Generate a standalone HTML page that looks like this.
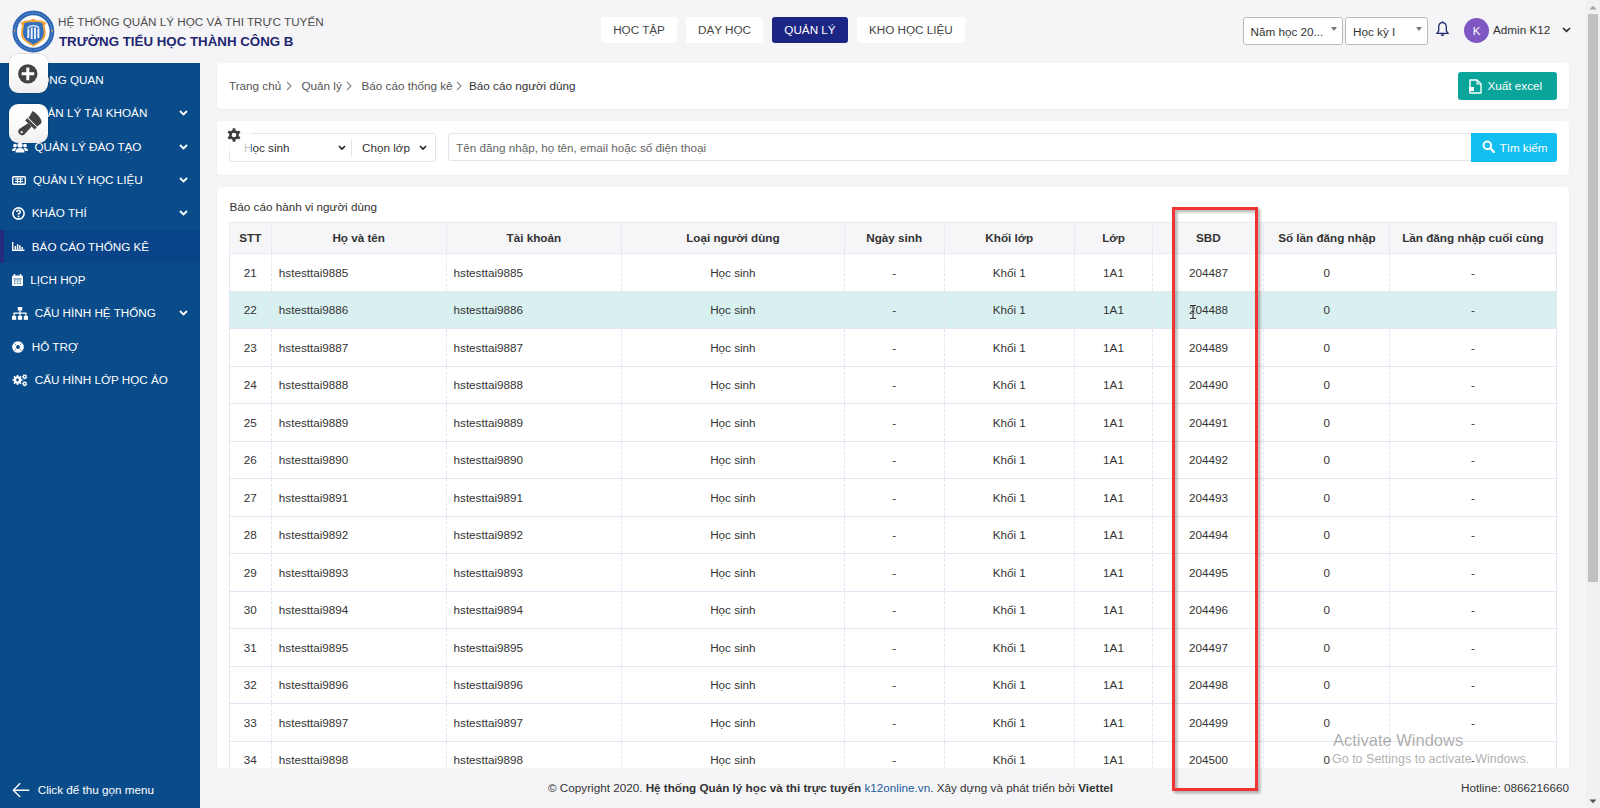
<!DOCTYPE html>
<html><head><meta charset="utf-8">
<style>
*{box-sizing:border-box;margin:0;padding:0}
html,body{width:1600px;height:808px;overflow:hidden}
body{font-family:"Liberation Sans",sans-serif;background:#f5f5f7;position:relative;color:#333;font-size:11.7px}
.abs{position:absolute}
/* header */
#logo{left:12px;top:10px;width:43px;height:43px}
#t1{left:58px;top:15px;font-size:11.7px;color:#4d4d4d;white-space:nowrap}
#t2{left:59px;top:33.5px;font-size:13.3px;font-weight:bold;color:#1f2670;white-space:nowrap}
.nav{top:16.5px;height:26.7px;background:#fff;border-radius:3px;font-size:11.7px;color:#444;text-align:center;line-height:26.7px}
.nav.act{background:#1b2583;color:#fff}
.sel{top:17px;height:28px;background:#fff;border:1px solid #b9b9b9;border-radius:3px;font-size:11.7px;color:#333;line-height:27px;padding-left:7px;white-space:nowrap}
.sel i{position:absolute;top:8.7px;border-left:3.5px solid transparent;border-right:3.5px solid transparent;border-top:4px solid #777}
/* sidebar */
#side{left:0;top:63px;width:200px;height:745px;background:#0a4c8a}
.mi{position:absolute;left:0;width:200px;height:33.3px;color:#fff;font-size:11.7px;line-height:33.3px;white-space:nowrap}
.mi svg.ic{position:absolute;left:12px}
.mi .tx{position:absolute;left:33px;top:0}
.mi svg.ch{position:absolute;left:179px;top:14px}
.mi.act{background:#0a4488}
.mi.act:before{content:"";position:absolute;left:0;top:0;width:4px;height:100%;background:#272b7d}
.fb{position:absolute;left:9px;width:39.4px;height:39px;border-radius:9px;background:linear-gradient(#fff 0%,#fbfbfb 50%,#efefef 100%);box-shadow:0 0 0 0.6px rgba(0,0,0,.18)}
/* cards */
.card{position:absolute;background:#fff;border-radius:4px;box-shadow:0 1px 3px rgba(0,0,0,.035)}
.bc{position:absolute;top:0;line-height:45px;color:#555;font-size:11.7px;white-space:nowrap}
table{position:absolute;left:228.8px;top:222px;border-collapse:collapse;table-layout:fixed;width:1327px}
th{height:31.25px;padding-bottom:0.4px;background:#f6f6f8;font-weight:bold;color:#333;font-size:11.7px;border:1px solid #e8eaf5;text-align:center;white-space:nowrap}
td{height:37.5px;padding-bottom:1px;font-size:11.7px;color:#333;border-left:1px dashed #e4e6f3;border-right:1px dashed #e4e6f3;border-bottom:1px solid #e4e6f3;white-space:nowrap;background:#fff}
td:first-child{border-left:1px solid #e4e6f3}
td:last-child{border-right:1px solid #e4e6f3}
td.c{text-align:center}
td.l{text-align:left;padding-left:7px}
tr.hl td{background:#d9f0f0}
#clip{position:absolute;left:0;top:0;width:1600px;height:767.7px;overflow:hidden}
</style></head><body>

<!-- header -->
<svg class="abs" style="left:10px;top:8px" width="48" height="48" viewBox="0 0 48 48">
<circle cx="23.35" cy="23.5" r="18.6" fill="#fff" stroke="#2d66b5" stroke-width="4.6"/>
<circle cx="23.35" cy="23.5" r="18.6" fill="none" stroke="#d5e1f2" stroke-width="1" stroke-dasharray="0.8 1.1" opacity="0.6"/>
<circle cx="4.6" cy="22.6" r="0.9" fill="#f0a640"/><circle cx="42.1" cy="22.6" r="0.9" fill="#f0a640"/>
<path d="M12.3 13.6 Q17 11.8 20.5 12.2 Q22 10.8 23.35 10.8 Q24.7 10.8 26.2 12.2 Q29.7 11.8 34.4 13.6 Q34.5 18 35.5 22 Q36.5 28.5 33.2 32 Q28.8 36 23.35 38.6 Q17.9 36 13.5 32 Q10.2 28.5 11.2 22 Q12.2 18 12.3 13.6 Z" fill="#eea53f"/>
<circle cx="12.2" cy="15.4" r="1.6" fill="#eea53f"/><circle cx="34.5" cy="15.4" r="1.6" fill="#eea53f"/>
<path d="M14.2 15.2 Q19 13.6 23.35 14.2 Q27.7 13.6 32.5 15.2 Q32.6 18.5 33.5 22 Q34.3 28 31.3 31.2 Q27.8 34.5 23.35 36.4 Q18.9 34.5 15.4 31.2 Q12.4 28 13.2 22 Q14.1 18.5 14.2 15.2 Z" fill="#3470c0"/>
<path d="M18.3 20.5v9.5M21.7 19.5v11.5M25 19.5v11.5M28.4 20.5v9.5" stroke="#eef3fa" stroke-width="1.9"/>
<path d="M17.5 19.8 Q23.35 15.5 29.2 19.8" stroke="#eef3fa" stroke-width="1.3" fill="none"/>
</svg>
<div class="abs" id="t1">HỆ THỐNG QUẢN LÝ HỌC VÀ THI TRỰC TUYẾN</div>
<div class="abs" id="t2">TRƯỜNG TIỂU HỌC THÀNH CÔNG B</div>

<div class="abs nav" style="left:600.7px;width:76.7px">HỌC TẬP</div>
<div class="abs nav" style="left:686px;width:77px">DẠY HỌC</div>
<div class="abs nav act" style="left:771.8px;width:76.4px">QUẢN LÝ</div>
<div class="abs nav" style="left:857px;width:107.8px">KHO HỌC LIỆU</div>

<div class="abs sel" style="left:1242.5px;width:100px">Năm học 20...<i style="left:87px"></i></div>
<div class="abs sel" style="left:1345px;width:83px">Học kỳ I<i style="left:70px"></i></div>

<!-- bell -->
<svg class="abs" style="left:1435px;top:21px" width="15" height="16" viewBox="0 0 15 16">
<path d="M7.5 1.6 C5 1.6 3.7 3.7 3.7 6.3 L3.7 9.8 L1.8 12.4 L13.2 12.4 L11.3 9.8 L11.3 6.3 C11.3 3.7 10 1.6 7.5 1.6 Z" fill="none" stroke="#1f2a70" stroke-width="1.3" stroke-linejoin="round"/>
<path d="M7.5 0.3v1.3" stroke="#1f2a70" stroke-width="1.3"/>
<path d="M6 13.6 Q7.5 15.4 9 13.6" fill="#1f2a70" stroke="#1f2a70" stroke-width="1.2"/>
</svg>
<!-- avatar -->
<div class="abs" style="left:1464px;top:18px;width:25px;height:25px;border-radius:50%;background:#7e57c2;color:#fff;font-size:11.5px;text-align:center;line-height:27px">K</div>
<div class="abs" style="left:1493px;top:23px;font-size:11.7px;color:#333;white-space:nowrap">Admin K12</div>
<svg class="abs" style="left:1561.5px;top:27.3px" width="9" height="6" viewBox="0 0 9 6"><path d="M1 1 L4.5 4.3 L8 1" fill="none" stroke="#2a2a2a" stroke-width="1.6"/></svg>

<!-- scrollbar -->
<div class="abs" style="left:1586px;top:0;width:14px;height:808px;background:#f1f1f1"></div>
<div class="abs" style="left:1587.5px;top:14px;width:10.6px;height:567.6px;background:#c1c1c1"></div>
<svg class="abs" style="left:1589px;top:5px" width="8" height="5" viewBox="0 0 8 5"><path d="M0.5 4.5 L4 0.8 L7.5 4.5 Z" fill="#a3a3a3"/></svg>
<svg class="abs" style="left:1589px;top:798.5px" width="8" height="5" viewBox="0 0 8 5"><path d="M0.5 0.5 L4 4.2 L7.5 0.5 Z" fill="#505050"/></svg>

<!-- sidebar -->
<div class="abs" id="side">
</div>

<div class="abs" style="left:0;top:63px;width:200px;height:745px">
<div class="mi" style="top:0"><span class="tx" style="left:33px">TỔNG QUAN</span></div>
<div class="mi" style="top:33.3px"><span class="tx" style="left:30px">QUẢN LÝ TÀI KHOẢN</span><svg class="ch" width="9" height="6" viewBox="0 0 9 6"><path d="M1 1 L4.5 4.5 L8 1" fill="none" stroke="#fff" stroke-width="1.8"/></svg></div>
<div class="mi" style="top:66.6px">
<svg class="ic" style="top:12px" width="16" height="11" viewBox="0 0 16 11"><circle cx="8" cy="3" r="2.6" fill="#fff"/><path d="M3.5 10.5 Q3.5 6 8 6 Q12.5 6 12.5 10.5 Z" fill="#fff"/><circle cx="3" cy="3.6" r="1.9" fill="#fff"/><circle cx="13" cy="3.6" r="1.9" fill="#fff"/><path d="M0 9 Q0 6 3 6 Q4 6 4.5 6.5 Q3 8 3 9 Z M16 9 Q16 6 13 6 Q12 6 11.5 6.5 Q13 8 13 9 Z" fill="#fff"/></svg>
<span class="tx" style="left:34.5px">QUẢN LÝ ĐÀO TẠO</span><svg class="ch" width="9" height="6" viewBox="0 0 9 6"><path d="M1 1 L4.5 4.5 L8 1" fill="none" stroke="#fff" stroke-width="1.8"/></svg></div>
<div class="mi" style="top:100px">
<svg class="ic" style="top:12.5px" width="14" height="9" viewBox="0 0 14 9"><rect x="0.7" y="0.7" width="12.6" height="7.6" rx="1" fill="none" stroke="#fff" stroke-width="1.4"/><path d="M3 3h8M3 5.5h8M5.5 2v5M8.5 2v5" stroke="#fff" stroke-width="1.2"/></svg>
<span class="tx" style="left:33px">QUẢN LÝ HỌC LIỆU</span><svg class="ch" width="9" height="6" viewBox="0 0 9 6"><path d="M1 1 L4.5 4.5 L8 1" fill="none" stroke="#fff" stroke-width="1.8"/></svg></div>
<div class="mi" style="top:133.3px">
<svg class="ic" style="top:11px" width="13" height="13" viewBox="0 0 13 13"><circle cx="6.5" cy="6.5" r="5.6" fill="none" stroke="#fff" stroke-width="1.6"/><path d="M4.7 5 Q4.7 3.3 6.5 3.3 Q8.3 3.3 8.3 4.9 Q8.3 6 6.5 6.6 L6.5 7.8" fill="none" stroke="#fff" stroke-width="1.5"/><circle cx="6.5" cy="9.5" r="0.9" fill="#fff"/></svg>
<span class="tx" style="left:31.8px">KHẢO THÍ</span><svg class="ch" width="9" height="6" viewBox="0 0 9 6"><path d="M1 1 L4.5 4.5 L8 1" fill="none" stroke="#fff" stroke-width="1.8"/></svg></div>
<div class="mi act" style="top:166.6px">
<svg class="ic" style="top:12.2px" width="12.5" height="9" viewBox="0 0 12.5 9"><path d="M0.7 0v8.3H12.5" fill="none" stroke="#fff" stroke-width="1.4"/><path d="M3.3 4v3.6M5.6 2.2v5.4M7.9 3.2v4.4M10.2 5v2.6" stroke="#fff" stroke-width="1.5"/></svg>
<span class="tx" style="left:31.8px">BÁO CÁO THỐNG KÊ</span></div>
<div class="mi" style="top:200px">
<svg class="ic" style="top:11px" width="11" height="12" viewBox="0 0 11 12"><rect x="0" y="1.5" width="11" height="10.5" rx="1.2" fill="#fff"/><path d="M2.5 0v3M8.5 0v3" stroke="#fff" stroke-width="1.4"/><path d="M1.5 5h8" stroke="#0a4c8a" stroke-width="0.8"/><path d="M2 7h1.5M4.8 7h1.5M7.5 7h1.5M2 9.3h1.5M4.8 9.3h1.5M7.5 9.3h1.5" stroke="#0a4c8a" stroke-width="1.1"/></svg>
<span class="tx" style="left:30.3px">LỊCH HỌP</span></div>
<div class="mi" style="top:233.3px">
<svg class="ic" style="top:10.5px" width="16" height="13" viewBox="0 0 16 13"><rect x="5.8" y="0" width="4.4" height="3.6" fill="#fff"/><rect x="0" y="8.8" width="4.2" height="4" fill="#fff"/><rect x="5.9" y="8.8" width="4.2" height="4" fill="#fff"/><rect x="11.8" y="8.8" width="4.2" height="4" fill="#fff"/><path d="M8 3.6v5.2M2.1 8.8V6.2h11.8v2.6" fill="none" stroke="#fff" stroke-width="1.3"/></svg>
<span class="tx" style="left:34.7px">CẤU HÌNH HỆ THỐNG</span><svg class="ch" width="9" height="6" viewBox="0 0 9 6"><path d="M1 1 L4.5 4.5 L8 1" fill="none" stroke="#fff" stroke-width="1.8"/></svg></div>
<div class="mi" style="top:266.6px">
<svg class="ic" style="top:11.5px;left:12.4px" width="12" height="12" viewBox="0 0 12 12"><circle cx="6" cy="6" r="3.9" fill="none" stroke="#fff" stroke-width="3.9"/><path d="M2.4 2.4l1.7 1.7M9.6 2.4L7.9 4.1M2.4 9.6l1.7-1.7M9.6 9.6L7.9 7.9" stroke="#0a4c8a" stroke-width="0.6"/></svg>
<span class="tx" style="left:31.8px">HỖ TRỢ</span></div>
<div class="mi" style="top:300px">
<svg class="ic" style="top:9.5px;left:11.75px" width="16" height="14" viewBox="0 0 16 14"><path d="M9.31 6.16 L10.53 6.18 L10.53 7.82 L9.31 7.84 L8.78 9.10 L9.64 9.98 L8.48 11.14 L7.60 10.28 L6.34 10.81 L6.32 12.03 L4.68 12.03 L4.66 10.81 L3.40 10.28 L2.52 11.14 L1.36 9.98 L2.22 9.10 L1.69 7.84 L0.47 7.82 L0.47 6.18 L1.69 6.16 L2.22 4.90 L1.36 4.02 L2.52 2.86 L3.40 3.72 L4.66 3.19 L4.68 1.97 L6.32 1.97 L6.34 3.19 L7.60 3.72 L8.48 2.86 L9.64 4.02 L8.78 4.90 Z" fill="#fff"/><circle cx="5.5" cy="7" r="1.4" fill="#0a4c8a"/><path d="M14.70 3.81 L15.40 3.94 L15.24 4.72 L14.54 4.57 L14.11 5.22 L14.51 5.81 L13.85 6.24 L13.46 5.65 L12.69 5.80 L12.56 6.50 L11.78 6.34 L11.93 5.64 L11.28 5.21 L10.69 5.61 L10.26 4.95 L10.85 4.56 L10.70 3.79 L10.00 3.66 L10.16 2.88 L10.86 3.03 L11.29 2.38 L10.89 1.79 L11.55 1.36 L11.94 1.95 L12.71 1.80 L12.84 1.10 L13.62 1.26 L13.47 1.96 L14.12 2.39 L14.71 1.99 L15.14 2.65 L14.55 3.04 Z" fill="#fff"/><circle cx="12.7" cy="3.8" r="0.8" fill="#0a4c8a"/><path d="M14.70 10.81 L15.40 10.94 L15.24 11.72 L14.54 11.57 L14.11 12.22 L14.51 12.81 L13.85 13.24 L13.46 12.65 L12.69 12.80 L12.56 13.50 L11.78 13.34 L11.93 12.64 L11.28 12.21 L10.69 12.61 L10.26 11.95 L10.85 11.56 L10.70 10.79 L10.00 10.66 L10.16 9.88 L10.86 10.03 L11.29 9.38 L10.89 8.79 L11.55 8.36 L11.94 8.95 L12.71 8.80 L12.84 8.10 L13.62 8.26 L13.47 8.96 L14.12 9.39 L14.71 8.99 L15.14 9.65 L14.55 10.04 Z" fill="#fff"/><circle cx="12.7" cy="10.8" r="0.8" fill="#0a4c8a"/></svg>
<span class="tx" style="left:34.7px">CẤU HÌNH LỚP HỌC ẢO</span></div>
</div>

<!-- bottom collapse -->
<svg class="abs" style="left:11.5px;top:781.5px" width="18" height="16" viewBox="0 0 18 16"><path d="M17.2 8.2H1.8M8.2 1.3L1.3 8.2l6.9 6.9" fill="none" stroke="#fff" stroke-width="1.35"/></svg>
<div class="abs" style="left:37.7px;top:782.5px;color:#fff;font-size:11.7px;white-space:nowrap">Click để thu gọn menu</div>

<!-- floating buttons -->
<div class="fb" style="top:54.2px">
<svg style="position:absolute;left:9.3px;top:10.3px" width="20" height="20" viewBox="0 0 20 20"><circle cx="9.8" cy="9.85" r="9.7" fill="#434343"/><path d="M9.8 3.6v12.6M3.6 9.85h12.6" stroke="#fff" stroke-width="3"/></svg>
</div>
<div class="fb" style="top:104.3px">
<svg style="position:absolute;left:6.5px;top:3.7px" width="28" height="28" viewBox="0 0 28 28">
<path d="M16.3 3.1 C19.8 4.6 24.3 9 25.6 13.2 L25.1 15.6 L21.1 18.4 L12.3 9.8 C13.8 8.2 15.3 6 16.3 3.1 Z" fill="#434343"/>
<path d="M11.3 10.6 L20.4 19.4 L18.6 21.1 L9.6 12.4 Z" fill="#434343" stroke="#434343" stroke-width="0.8" stroke-linejoin="round"/>
<path d="M12 15.3 L15.4 18.7 L8.6 26.3 Q6 28.6 3.5 26 Q1 23.5 3.3 21 Z" fill="#434343"/>
<circle cx="5.7" cy="24.2" r="1.15" fill="#f3f3f3"/>
</svg>
</div>

<!-- breadcrumb card -->
<div class="card" style="left:217px;top:63px;width:1351.7px;height:45.75px">
<span class="bc" style="left:12px">Trang chủ</span>
<svg class="abs" style="left:69px;top:18px" width="6" height="10" viewBox="0 0 6 10"><path d="M1 1l4 4-4 4" fill="none" stroke="#888" stroke-width="1.1"/></svg>
<span class="bc" style="left:84.5px">Quản lý</span>
<svg class="abs" style="left:128.5px;top:18px" width="6" height="10" viewBox="0 0 6 10"><path d="M1 1l4 4-4 4" fill="none" stroke="#888" stroke-width="1.1"/></svg>
<span class="bc" style="left:144.5px">Báo cáo thống kê</span>
<svg class="abs" style="left:238.5px;top:18px" width="6" height="10" viewBox="0 0 6 10"><path d="M1 1l4 4-4 4" fill="none" stroke="#888" stroke-width="1.1"/></svg>
<span class="bc" style="left:252px;color:#333">Báo cáo người dùng</span>
<div class="abs" style="left:1240.5px;top:8.75px;width:99.25px;height:28.25px;background:#0aa59a;border-radius:3px"></div>
<svg class="abs" style="left:1252px;top:15.5px" width="13" height="15" viewBox="0 0 13 15"><path d="M1 1h7l4 4v9H1z" fill="none" stroke="#fff" stroke-width="1.4" stroke-linejoin="round"/><path d="M8 1v4h4" fill="none" stroke="#fff" stroke-width="1.2"/><rect x="0" y="8" width="5" height="4" fill="#fff"/></svg>
<span class="abs" style="left:1270.5px;top:15.5px;color:#fff;font-size:11.7px;white-space:nowrap">Xuất excel</span>
</div>

<!-- filter card -->
<div class="card" style="left:217px;top:120.5px;width:1351.7px;height:54px">
<div class="abs" style="left:12.25px;top:12.75px;width:206.25px;height:28.6px;border:1px solid #e3e5f0;border-radius:3px"></div>
<div class="abs" style="left:134.3px;top:18px;width:1px;height:18px;background:#e3e5f0"></div>
<span class="abs" style="left:27px;top:20px;font-size:11.7px;color:#333;white-space:nowrap">Học sinh</span>
<svg class="abs" style="left:121px;top:24.5px" width="8" height="6" viewBox="0 0 8 6"><path d="M1 1l3 3 3-3" fill="none" stroke="#222" stroke-width="1.6"/></svg>
<span class="abs" style="left:145px;top:20px;font-size:11.7px;color:#333;white-space:nowrap">Chọn lớp</span>
<svg class="abs" style="left:201.5px;top:24.5px" width="8" height="6" viewBox="0 0 8 6"><path d="M1 1l3 3 3-3" fill="none" stroke="#222" stroke-width="1.6"/></svg>
<div class="abs" style="left:1.7px;top:3.5px;width:32.2px;height:28px;background:rgba(255,255,255,.72)"></div>
<svg class="abs" style="left:10.2px;top:7.5px" width="14" height="14" viewBox="0 0 14 14"><path d="M5.58 2.21 L5.64 0.34 L8.36 0.34 L8.42 2.21 L10.44 3.37 L12.09 2.49 L13.45 4.85 L11.86 5.83 L11.86 8.17 L13.45 9.15 L12.09 11.51 L10.44 10.63 L8.42 11.79 L8.36 13.66 L5.64 13.66 L5.58 11.79 L3.56 10.63 L1.91 11.51 L0.55 9.15 L2.14 8.17 L2.14 5.83 L0.55 4.85 L1.91 2.49 L3.56 3.37 Z" fill="#3f3b3b"/><circle cx="7" cy="7" r="2.3" fill="#fff"/></svg>
<div class="abs" style="left:231.2px;top:12.75px;width:1108.5px;height:28.15px;border:1px solid #e3e5f0;border-radius:3px 0 0 3px"></div>
<span class="abs" style="left:239px;top:20px;font-size:11.7px;color:#666;white-space:nowrap">Tên đăng nhập, họ tên, email hoặc số điện thoại</span>
<div class="abs" style="left:1254.25px;top:12.9px;width:85.35px;height:28.2px;background:#13bef0;border-radius:0 3px 3px 0"></div>
<svg class="abs" style="left:1265px;top:19.5px" width="13" height="13" viewBox="0 0 13 13"><circle cx="5.3" cy="5.3" r="3.8" fill="none" stroke="#fff" stroke-width="2"/><path d="M8.2 8.2l3.6 3.6" stroke="#fff" stroke-width="2.4" stroke-linecap="round"/></svg>
<span class="abs" style="left:1282.5px;top:20px;font-size:11.7px;color:#fff;white-space:nowrap">Tìm kiếm</span>
</div>

<!-- table card -->
<div id="clip">
<div class="card" style="left:217px;top:187.2px;width:1351.7px;height:600px"></div>
<span class="abs" style="left:229.5px;top:199.5px;font-size:11.7px;color:#333;white-space:nowrap">Báo cáo hành vi người dùng</span>
<table>
<colgroup><col style="width:42.05px"><col style="width:174.7px"><col style="width:175.7px"><col style="width:222.3px"><col style="width:100.4px"><col style="width:129.8px"><col style="width:78.6px"><col style="width:111.2px"><col style="width:125.7px"><col style="width:166.6px"></colgroup>
<thead><tr><th>STT</th><th>Họ và tên</th><th>Tài khoản</th><th>Loại người dùng</th><th>Ngày sinh</th><th>Khối lớp</th><th>Lớp</th><th>SBD</th><th>Số lần đăng nhập</th><th>Lần đăng nhập cuối cùng</th></tr></thead>
<tbody>
<tr><td class="c">21</td><td class="l">hstesttai9885</td><td class="l">hstesttai9885</td><td class="c">Học sinh</td><td class="c">-</td><td class="c">Khối 1</td><td class="c">1A1</td><td class="c">204487</td><td class="c">0</td><td class="c">-</td></tr>
<tr class="hl"><td class="c">22</td><td class="l">hstesttai9886</td><td class="l">hstesttai9886</td><td class="c">Học sinh</td><td class="c">-</td><td class="c">Khối 1</td><td class="c">1A1</td><td class="c">204488</td><td class="c">0</td><td class="c">-</td></tr>
<tr><td class="c">23</td><td class="l">hstesttai9887</td><td class="l">hstesttai9887</td><td class="c">Học sinh</td><td class="c">-</td><td class="c">Khối 1</td><td class="c">1A1</td><td class="c">204489</td><td class="c">0</td><td class="c">-</td></tr>
<tr><td class="c">24</td><td class="l">hstesttai9888</td><td class="l">hstesttai9888</td><td class="c">Học sinh</td><td class="c">-</td><td class="c">Khối 1</td><td class="c">1A1</td><td class="c">204490</td><td class="c">0</td><td class="c">-</td></tr>
<tr><td class="c">25</td><td class="l">hstesttai9889</td><td class="l">hstesttai9889</td><td class="c">Học sinh</td><td class="c">-</td><td class="c">Khối 1</td><td class="c">1A1</td><td class="c">204491</td><td class="c">0</td><td class="c">-</td></tr>
<tr><td class="c">26</td><td class="l">hstesttai9890</td><td class="l">hstesttai9890</td><td class="c">Học sinh</td><td class="c">-</td><td class="c">Khối 1</td><td class="c">1A1</td><td class="c">204492</td><td class="c">0</td><td class="c">-</td></tr>
<tr><td class="c">27</td><td class="l">hstesttai9891</td><td class="l">hstesttai9891</td><td class="c">Học sinh</td><td class="c">-</td><td class="c">Khối 1</td><td class="c">1A1</td><td class="c">204493</td><td class="c">0</td><td class="c">-</td></tr>
<tr><td class="c">28</td><td class="l">hstesttai9892</td><td class="l">hstesttai9892</td><td class="c">Học sinh</td><td class="c">-</td><td class="c">Khối 1</td><td class="c">1A1</td><td class="c">204494</td><td class="c">0</td><td class="c">-</td></tr>
<tr><td class="c">29</td><td class="l">hstesttai9893</td><td class="l">hstesttai9893</td><td class="c">Học sinh</td><td class="c">-</td><td class="c">Khối 1</td><td class="c">1A1</td><td class="c">204495</td><td class="c">0</td><td class="c">-</td></tr>
<tr><td class="c">30</td><td class="l">hstesttai9894</td><td class="l">hstesttai9894</td><td class="c">Học sinh</td><td class="c">-</td><td class="c">Khối 1</td><td class="c">1A1</td><td class="c">204496</td><td class="c">0</td><td class="c">-</td></tr>
<tr><td class="c">31</td><td class="l">hstesttai9895</td><td class="l">hstesttai9895</td><td class="c">Học sinh</td><td class="c">-</td><td class="c">Khối 1</td><td class="c">1A1</td><td class="c">204497</td><td class="c">0</td><td class="c">-</td></tr>
<tr><td class="c">32</td><td class="l">hstesttai9896</td><td class="l">hstesttai9896</td><td class="c">Học sinh</td><td class="c">-</td><td class="c">Khối 1</td><td class="c">1A1</td><td class="c">204498</td><td class="c">0</td><td class="c">-</td></tr>
<tr><td class="c">33</td><td class="l">hstesttai9897</td><td class="l">hstesttai9897</td><td class="c">Học sinh</td><td class="c">-</td><td class="c">Khối 1</td><td class="c">1A1</td><td class="c">204499</td><td class="c">0</td><td class="c">-</td></tr>
<tr><td class="c">34</td><td class="l">hstesttai9898</td><td class="l">hstesttai9898</td><td class="c">Học sinh</td><td class="c">-</td><td class="c">Khối 1</td><td class="c">1A1</td><td class="c">204500</td><td class="c">0</td><td class="c">-</td></tr>
</tbody>
</table>
</div>

<!-- footer -->
<div class="abs" style="left:548px;top:781px;font-size:11.7px;color:#333;white-space:nowrap">© Copyright 2020. <b>Hệ thống Quản lý học và thi trực tuyến</b> <span style="color:#1d5c9c">k12online.vn</span>. Xây dựng và phát triển bởi <b>Viettel</b></div>
<div class="abs" style="left:1461px;top:781px;font-size:11.7px;color:#333;white-space:nowrap">Hotline: 0866216660</div>

<!-- red box -->
<div class="abs" style="left:1172.2px;top:206.6px;width:85.8px;height:584.8px;border:3px solid #ef3434;filter:drop-shadow(2px 2px 1.5px rgba(0,0,0,.35))"></div>
<svg class="abs" style="left:1189px;top:304px" width="8" height="16" viewBox="0 0 8 16"><path d="M1 1.5h2.2L4 2.3l0.8-0.8H7M4 2.3v11.4M1 14.5h2.2L4 13.7l0.8 0.8H7M2.6 7.8h2.8" fill="none" stroke="#fff" stroke-width="2.4" opacity="0.8"/><path d="M1 1.5h2.2L4 2.3l0.8-0.8H7M4 2.3v11.4M1 14.5h2.2L4 13.7l0.8 0.8H7M2.6 7.8h2.8" fill="none" stroke="#222" stroke-width="1.1"/></svg>

<!-- activate windows -->
<div class="abs" style="left:1333px;top:730.5px;font-size:16.5px;color:rgba(120,120,120,.6);white-space:nowrap">Activate Windows</div>
<div class="abs" style="left:1332px;top:752px;font-size:12.5px;color:rgba(120,120,120,.6);white-space:nowrap">Go to Settings to activate Windows.</div>

</body></html>
